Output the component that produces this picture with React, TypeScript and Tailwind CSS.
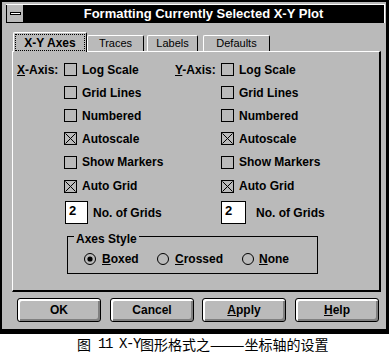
import React from "react";

type Item = { text: string; checked?: boolean; h: string };

const rows: Item[] = [
  { text: "Log Scale", h: "h-[23px]" },
  { text: "Grid Lines", h: "h-[23px]" },
  { text: "Numbered", h: "h-[23px]" },
  { text: "Autoscale", checked: true, h: "h-[23px]" },
  { text: "Show Markers", h: "h-[24px]" },
  { text: "Auto Grid", checked: true, h: "h-[24px]" },
];

const CheckBox = ({ checked }: { checked?: boolean }) => (
  <svg width="13" height="13" viewBox="0 0 13 13" className="shrink-0">
    <rect x="0.5" y="0.5" width="12" height="12" fill="none" stroke="#000" />
    {checked && <path d="M1.5 1.5L11.5 11.5M11.5 1.5L1.5 11.5" stroke="#000" strokeWidth="1" />}
  </svg>
);

const Radio = ({ on }: { on?: boolean }) => (
  <svg width="12" height="12" viewBox="0 0 12 12" className="shrink-0">
    <circle cx="6" cy="6" r="5.5" fill="none" stroke="#000" />
    {on && <circle cx="6" cy="6" r="2.6" fill="#000" />}
  </svg>
);

const Button = ({ children, ml }: { children: React.ReactNode; ml: string }) => (
  <div
    className={`${ml} w-[84px] h-[24px] border border-black rounded-[3px] shadow-[inset_2px_2px_0_#fff,inset_-2px_-2px_0_#808080] flex items-center justify-center font-bold text-[12px]`}
  >
    {children}
  </div>
);

export default function App() {
  return (
    <div className="w-[389px] h-[354px] bg-white font-['Liberation_Sans',Arial,sans-serif] text-black">
      <div className="h-[334px] bg-[#bababa] border-l-2 border-t-2 border-r-[3px] border-b-[5px] border-black flex flex-col">
        {/* 标题栏 */}
        <div className="mt-[2px] ml-[4px] mr-[1px] h-[19px] bg-black border-t border-r border-white flex">
          <div className="w-[16px] h-[17px] ml-[1px] bg-[#bababa] flex items-center justify-center">
            <div className="w-[11px] h-[3px] bg-white border border-black" />
          </div>
          <div className="flex-1 text-center text-white font-bold text-[13px] leading-[18px]">
            Formatting Currently Selected X-Y Plot
          </div>
        </div>

        {/* 选项卡 */}
        <div className="relative z-10 mt-[9px] -mb-[1px] ml-[11px] h-[20px] flex items-end">
          <div className="w-[74px] h-[20px] bg-[#bababa] border-l border-t border-white border-r border-r-black rounded-t-[2px] p-[1px]">
            <div className="h-full border border-dotted border-black flex items-center justify-center font-bold text-[12px]">
              X-Y Axes
            </div>
          </div>
          <div className="mb-[1px] w-[57px] h-[16px] border-l border-t border-white border-r border-r-black rounded-t-[2px] flex items-center justify-center text-[11px]">
            Traces
          </div>
          <div className="mb-[1px] ml-[3px] w-[51px] h-[16px] border-l border-t border-white border-r border-r-black rounded-t-[2px] flex items-center justify-center text-[11px]">
            Labels
          </div>
          <div className="mb-[1px] ml-[5px] w-[67px] h-[16px] border-l border-t border-white border-r border-r-black rounded-t-[2px] flex items-center justify-center text-[11px]">
            Defaults
          </div>
        </div>

        {/* 面板 */}
        <div className="ml-[10px] w-[369px] h-[241px] border-l border-t border-white border-r-2 border-b-2 border-r-black border-b-black pt-[6px] pl-[4px] font-bold text-[12px]">
          {rows.map((r, i) => (
            <div key={r.text} className={`flex items-center ${r.h}`}>
              <div className="w-[158px] flex items-center">
                <span className="w-[47px]">
                  {i === 0 && (
                    <>
                      <u>X</u>-Axis:
                    </>
                  )}
                </span>
                <CheckBox checked={r.checked} />
                <span className="ml-[5px]">{r.text}</span>
              </div>
              <div className="flex items-center">
                <span className="w-[46px]">
                  {i === 0 && (
                    <>
                      <u>Y</u>-Axis:
                    </>
                  )}
                </span>
                <CheckBox checked={r.checked} />
                <span className="ml-[5px]">{r.text}</span>
              </div>
            </div>
          ))}

          <div className="flex items-center h-[29px]">
            <div className="w-[158px] flex items-center">
              <span className="w-[48px]" />
              <div className="w-[23px] h-[23px] bg-white border border-black pl-[3px] pt-[2px] leading-[14px] text-[13px]">2</div>
              <span className="ml-[5px]">No. of Grids</span>
            </div>
            <div className="flex items-center">
              <span className="w-[46px]" />
              <div className="w-[25px] h-[23px] bg-white border border-black pl-[3px] pt-[2px] leading-[14px] text-[13px]">2</div>
              <span className="ml-[10px]">No. of Grids</span>
            </div>
          </div>

          {/* 坐标轴样式 */}
          <div className="mt-[9px] ml-[50px] w-[251px] h-[38px] border border-black">
            <div className="-mt-[5px] ml-[6px] px-[2px] w-fit bg-[#bababa] leading-[14px]">Axes Style</div>
            <div className="mt-[6px] h-[14px] flex items-center">
              <div className="ml-[16px] w-[73px] flex items-center">
                <Radio on />
                <span className="ml-[6px]">
                  <u>B</u>oxed
                </span>
              </div>
              <div className="w-[85px] flex items-center">
                <Radio />
                <span className="ml-[6px]">
                  <u>C</u>rossed
                </span>
              </div>
              <div className="flex items-center">
                <Radio />
                <span className="ml-[5px]">
                  <u>N</u>one
                </span>
              </div>
            </div>
          </div>
        </div>

        {/* 按钮 */}
        <div className="mt-[6px] flex">
          <Button ml="ml-[15px]">OK</Button>
          <Button ml="ml-[9px]">Cancel</Button>
          <Button ml="ml-[8px]">
            <span>
              <u>A</u>pply
            </span>
          </Button>
          <Button ml="ml-[9px]">
            <span>
              <u>H</u>elp
            </span>
          </Button>
        </div>
      </div>

      {/* 图注 */}
      <div className="h-[20px] flex items-center pl-[77px] text-[14px] leading-[20px] font-['Noto_Sans_CJK_SC',sans-serif] whitespace-pre">
        <span>图</span>
        <span className="font-['Liberation_Mono','Noto_Sans_CJK_SC',monospace] tracking-[-1.4px]"> 11 X-Y</span>
        <span>图形格式之———坐标轴的设置</span>
      </div>
    </div>
  );
}
